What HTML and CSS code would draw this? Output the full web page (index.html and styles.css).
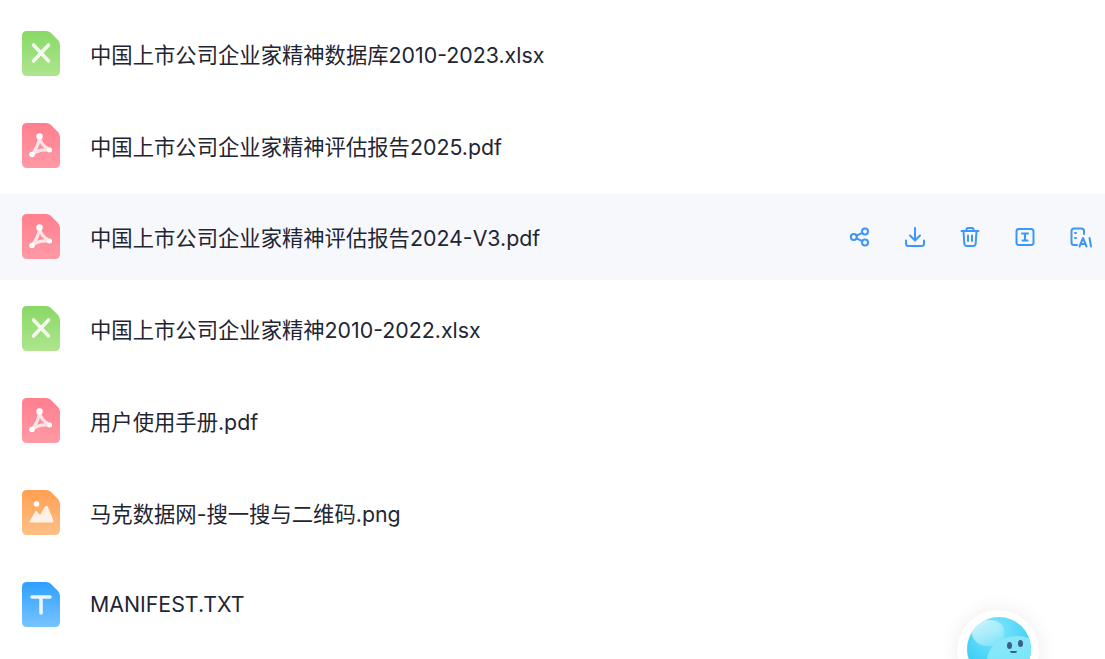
FILE: index.html
```html
<!DOCTYPE html>
<html lang="en">
<head>
  <meta charset="UTF-8">
  <title>文件列表</title>
  <link rel="stylesheet" href="styles.css">
</head>
<body>
  <svg class="defs" width="0" height="0">
    <defs>
      <linearGradient id="gradGreen" x1="0" y1="0" x2="0" y2="1"><stop offset="0" stop-color="#88d966"/><stop offset="1" stop-color="#aee58e"/></linearGradient>
      <linearGradient id="gradRed" x1="0" y1="0" x2="0" y2="1"><stop offset="0" stop-color="#ff7f8e"/><stop offset="1" stop-color="#ff9aa5"/></linearGradient>
      <linearGradient id="gradOrange" x1="0" y1="0" x2="0" y2="1"><stop offset="0" stop-color="#ffa053"/><stop offset="1" stop-color="#ffbf86"/></linearGradient>
      <linearGradient id="gradBlue" x1="0" y1="0" x2="0" y2="1"><stop offset="0" stop-color="#2ea0ff"/><stop offset="1" stop-color="#78c4ff"/></linearGradient>
      <path id="sheet" d="M5 0H24Q27 0 29 2L36 9Q38 11 38 14V40Q38 45 33 45H5Q0 45 0 40V5Q0 0 5 0Z"/>
      <symbol id="fileXlsx" viewBox="0 0 38 45">
        <use href="#sheet" fill="url(#gradGreen)"/>
        <path d="M11.500 14L26.500 30M26.500 14L11.500 30" stroke="#f3fbee" stroke-width="3.600" stroke-linecap="round" fill="none"/>
      </symbol>
      <symbol id="filePdf" viewBox="0 0 38 45">
        <use href="#sheet" fill="url(#gradRed)"/>
        <path d="M17.500 13Q17.500 22 9.700 32M17.500 13Q18 22 28 27M9.700 32Q15 26 28 27" stroke="#fde4e7" stroke-width="3.200" stroke-linecap="round" fill="none"/>
        <circle cx="17.500" cy="13.500" r="3.200" fill="#fff"/>
        <circle cx="10" cy="31.500" r="2.800" fill="#fff"/>
        <circle cx="27.500" cy="27" r="2.500" fill="#fff"/>
      </symbol>
      <symbol id="filePng" viewBox="0 0 38 45">
        <use href="#sheet" fill="url(#gradOrange)"/>
        <circle cx="14.500" cy="14" r="2.800" fill="#fff"/>
        <path d="M7.500 32.500Q7 32 8 30.500L14 20.500L18 25L23 16.500Q24.500 15 26 17L31.500 30.500Q32 32.500 30.500 32.500Z" fill="#fdf1e7"/>
      </symbol>
      <symbol id="fileTxt" viewBox="0 0 38 45">
        <use href="#sheet" fill="url(#gradBlue)"/>
        <path d="M10 15H28M19 15V31" stroke="#eaf6ff" stroke-width="3.600" stroke-linecap="round" fill="none"/>
      </symbol>
    </defs>
  </svg>

  <ul class="file-list">
    <li class="file-row">
      <svg class="file-icon"><use href="#fileXlsx"/></svg>
      <span class="file-name">中国上市公司企业家精神数据库2010-2023.xlsx</span>
    </li>
    <li class="file-row">
      <svg class="file-icon"><use href="#filePdf"/></svg>
      <span class="file-name">中国上市公司企业家精神评估报告2025.pdf</span>
    </li>
    <li class="file-row active">
      <svg class="file-icon"><use href="#filePdf"/></svg>
      <span class="file-name">中国上市公司企业家精神评估报告2024-V3.pdf</span>
      <div class="actions">
        <svg class="act" viewBox="0 0 22 22"><circle cx="4.800" cy="11" r="3"/><circle cx="16" cy="5.500" r="3"/><circle cx="16" cy="16.500" r="3"/><path d="M7.500 9.700L13.300 6.800M7.500 12.300L13.300 15.200"/></svg>
        <svg class="act" viewBox="0 0 22 22"><path d="M11 2V14M6 9.500L11 14.500L16 9.500M2 14.500V17.500Q2 20 4.500 20H17.500Q20 20 20 17.500V14.500"/></svg>
        <svg class="act" viewBox="0 0 22 22"><path d="M2.500 5H19.500M7.500 5V3.500Q7.500 2 9 2H13Q14.500 2 14.500 3.500V5M4.500 5L5.300 17.500Q5.500 20 8 20H14Q16.500 20 16.700 17.500L17.500 5M9 9.500V15M13 9.500V15"/></svg>
        <svg class="act" viewBox="0 0 22 22"><rect x="2.500" y="3" width="17" height="16" rx="2.500"/><path d="M8 7.500H14M11 7.500V14.500M8.500 14.500H13.500"/></svg>
        <svg class="act" viewBox="0 0 22 22"><path d="M8 19H5Q2.500 19 2.500 16.500V5Q2.500 2.500 5 2.500H12Q15 2.500 15 5V8M6 7H7M6 12H7"/><path d="M10.500 20.500L14 12L17.500 20.500M11.800 18H16.200M20.500 12L22 20.500"/></svg>
      </div>
    </li>
    <li class="file-row">
      <svg class="file-icon"><use href="#fileXlsx"/></svg>
      <span class="file-name">中国上市公司企业家精神2010-2022.xlsx</span>
    </li>
    <li class="file-row">
      <svg class="file-icon"><use href="#filePdf"/></svg>
      <span class="file-name">用户使用手册.pdf</span>
    </li>
    <li class="file-row">
      <svg class="file-icon"><use href="#filePng"/></svg>
      <span class="file-name">马克数据网-搜一搜与二维码.png</span>
    </li>
    <li class="file-row">
      <svg class="file-icon"><use href="#fileTxt"/></svg>
      <span class="file-name">MANIFEST.TXT</span>
    </li>
  </ul>

  <div class="assistant-clip">
    <div class="assistant">
      <div class="bubble">
        <div class="bubble-shine"></div>
        <div class="bubble-face">
          <span class="eye"></span>
          <span class="eye eye-right"></span>
          <span class="smile"></span>
        </div>
      </div>
    </div>
  </div>
</body>
</html>
```

FILE: styles.css
```css
* {
  box-sizing: border-box;
  margin: 0;
  padding: 0;
}

html, body {
  height: 100%;
  overflow: hidden;
}

body {
  background: #fff;
  position: relative;
  font-family: "Inter", "Noto Sans CJK SC", sans-serif;
}

.defs {
  display: block;
  height: 0;
}

.file-list {
  list-style: none;
  display: flex;
  flex-direction: column;
  gap: 5.8px;
  padding-top: 10.4px;
  height: 100%;
  overflow: hidden;
}

.file-row {
  height: 86px;
  flex: none;
  display: flex;
  align-items: center;
  padding-left: 22px;
}

.file-row.active {
  background: #f7f8fc;
}

.file-icon {
  width: 38px;
  height: 45px;
  flex: none;
}

.file-name {
  margin-left: 30px;
  font-size: 21.33px;
  color: #1f2533;
  white-space: nowrap;
}

.actions {
  margin-left: auto;
  display: flex;
  gap: 33px;
  margin-right: 14px;
}

.act {
  width: 22px;
  height: 22px;
  flex: none;
  fill: none;
  stroke: #3d96fb;
  stroke-width: 2;
  stroke-linecap: round;
  stroke-linejoin: round;
  overflow: visible;
}

.assistant-clip {
  position: absolute;
  left: 927px;
  bottom: 0;
  width: 142px;
  height: 79px;
  padding: 30px 30px 0;
  overflow: hidden;
}

.assistant {
  width: 82px;
  height: 82px;
  border-radius: 50%;
  background: #fff;
  box-shadow: 0 0 20px rgba(0, 0, 0, 0.08);
  padding: 7px 10px;
}

.bubble {
  position: relative;
  width: 64px;
  height: 64px;
  border-radius: 50%;
  overflow: hidden;
  background: radial-gradient(circle at 45% 20%, #7fe6fb 0%, #45d2f6 55%, #1fbdee 100%);
}

.bubble-shine {
  position: absolute;
  left: 5px;
  top: 3px;
  width: 32px;
  height: 26px;
  border-radius: 60% 50% 40% 60%;
  background: linear-gradient(135deg, rgba(255, 255, 255, 0.75), rgba(255, 255, 255, 0.05));
}

.bubble-face {
  position: absolute;
  left: 20px;
  top: 19px;
  width: 60px;
  height: 50px;
  border-radius: 50%;
  background: linear-gradient(160deg, #8de9fa, #6fe1f8);
}

.eye {
  position: absolute;
  left: 19.5px;
  top: 5.5px;
  width: 5px;
  height: 7px;
  border-radius: 50%;
  background: #3b5f86;
}

.eye-right {
  left: 30.5px;
  top: 3.5px;
}

.smile {
  position: absolute;
  left: 22.5px;
  top: 15px;
  width: 7px;
  height: 2px;
  border-radius: 0 0 3px 3px;
  background: #3b5f86;
}
```
